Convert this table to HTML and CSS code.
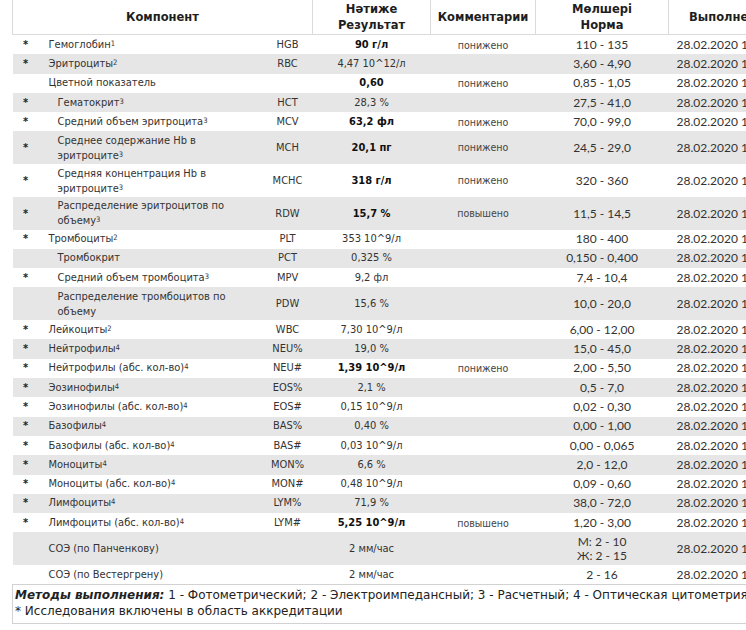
FILE: index.html
```html
<!DOCTYPE html>
<html lang="ru">
<head>
<meta charset="utf-8">
<title>Общий анализ крови</title>
<link rel="stylesheet" href="styles.css">
</head>
<body>
<div class="sheet">
  <table class="lab">
    <colgroup>
      <col class="c-star"><col class="c-name"><col class="c-code"><col class="c-res"><col class="c-com"><col class="c-norm"><col class="c-date">
    </colgroup>
    <thead>
      <tr>
        <th colspan="3">Компонент</th>
        <th>Нәтиже<br>Результат</th>
        <th>Комментарии</th>
        <th>Мөлшері<br>Норма</th>
        <th class="h-date">Выполнено</th>
      </tr>
    </thead>
    <tbody>
      <tr><td class="star">*</td><td class="name">Гемоглобин<sup>1</sup></td><td class="code">HGB</td><td class="res b">90 г/л</td><td class="com">понижено</td><td class="norm">110 - 135</td><td class="date">28.02.2020 10:15</td></tr>
      <tr><td class="star">*</td><td class="name">Эритроциты<sup>2</sup></td><td class="code">RBC</td><td class="res">4,47 10^12/л</td><td class="com"></td><td class="norm">3,60 - 4,90</td><td class="date">28.02.2020 10:15</td></tr>
      <tr><td class="star"></td><td class="name">Цветной показатель</td><td class="code"></td><td class="res b">0,60</td><td class="com">понижено</td><td class="norm">0,85 - 1,05</td><td class="date">28.02.2020 10:15</td></tr>
      <tr><td class="star">*</td><td class="name ind">Гематокрит<sup>3</sup></td><td class="code">HCT</td><td class="res">28,3 %</td><td class="com"></td><td class="norm">27,5 - 41,0</td><td class="date">28.02.2020 10:15</td></tr>
      <tr><td class="star">*</td><td class="name ind">Средний объем эритроцита<sup>3</sup></td><td class="code">MCV</td><td class="res b">63,2 фл</td><td class="com">понижено</td><td class="norm">70,0 - 99,0</td><td class="date">28.02.2020 10:15</td></tr>
      <tr class="dbl"><td class="star">*</td><td class="name ind">Среднее содержание Hb в<br>эритроците<sup>3</sup></td><td class="code">MCH</td><td class="res b">20,1 пг</td><td class="com">понижено</td><td class="norm">24,5 - 29,0</td><td class="date">28.02.2020 10:15</td></tr>
      <tr class="dbl"><td class="star">*</td><td class="name ind">Средняя концентрация Hb в<br>эритроците<sup>3</sup></td><td class="code">MCHC</td><td class="res b">318 г/л</td><td class="com">понижено</td><td class="norm">320 - 360</td><td class="date">28.02.2020 10:15</td></tr>
      <tr class="dbl"><td class="star">*</td><td class="name ind">Распределение эритроцитов по<br>объему<sup>3</sup></td><td class="code">RDW</td><td class="res b">15,7 %</td><td class="com">повышено</td><td class="norm">11,5 - 14,5</td><td class="date">28.02.2020 10:15</td></tr>
      <tr><td class="star">*</td><td class="name">Тромбоциты<sup>2</sup></td><td class="code">PLT</td><td class="res">353 10^9/л</td><td class="com"></td><td class="norm">180 - 400</td><td class="date">28.02.2020 10:15</td></tr>
      <tr><td class="star"></td><td class="name ind">Тромбокрит</td><td class="code">PCT</td><td class="res">0,325 %</td><td class="com"></td><td class="norm">0,150 - 0,400</td><td class="date">28.02.2020 10:15</td></tr>
      <tr><td class="star">*</td><td class="name ind">Средний объем тромбоцита<sup>3</sup></td><td class="code">MPV</td><td class="res">9,2 фл</td><td class="com"></td><td class="norm">7,4 - 10,4</td><td class="date">28.02.2020 10:15</td></tr>
      <tr class="dbl"><td class="star"></td><td class="name ind">Распределение тромбоцитов по<br>объему</td><td class="code">PDW</td><td class="res">15,6 %</td><td class="com"></td><td class="norm">10,0 - 20,0</td><td class="date">28.02.2020 10:15</td></tr>
      <tr><td class="star">*</td><td class="name">Лейкоциты<sup>2</sup></td><td class="code">WBC</td><td class="res">7,30 10^9/л</td><td class="com"></td><td class="norm">6,00 - 12,00</td><td class="date">28.02.2020 10:15</td></tr>
      <tr><td class="star">*</td><td class="name">Нейтрофилы<sup>4</sup></td><td class="code">NEU%</td><td class="res">19,0 %</td><td class="com"></td><td class="norm">15,0 - 45,0</td><td class="date">28.02.2020 10:15</td></tr>
      <tr><td class="star">*</td><td class="name">Нейтрофилы (абс. кол-во)<sup>4</sup></td><td class="code">NEU#</td><td class="res b">1,39 10^9/л</td><td class="com">понижено</td><td class="norm">2,00 - 5,50</td><td class="date">28.02.2020 10:15</td></tr>
      <tr><td class="star">*</td><td class="name">Эозинофилы<sup>4</sup></td><td class="code">EOS%</td><td class="res">2,1 %</td><td class="com"></td><td class="norm">0,5 - 7,0</td><td class="date">28.02.2020 10:15</td></tr>
      <tr><td class="star">*</td><td class="name">Эозинофилы (абс. кол-во)<sup>4</sup></td><td class="code">EOS#</td><td class="res">0,15 10^9/л</td><td class="com"></td><td class="norm">0,02 - 0,30</td><td class="date">28.02.2020 10:15</td></tr>
      <tr><td class="star">*</td><td class="name">Базофилы<sup>4</sup></td><td class="code">BAS%</td><td class="res">0,40 %</td><td class="com"></td><td class="norm">0,00 - 1,00</td><td class="date">28.02.2020 10:15</td></tr>
      <tr><td class="star">*</td><td class="name">Базофилы (абс. кол-во)<sup>4</sup></td><td class="code">BAS#</td><td class="res">0,03 10^9/л</td><td class="com"></td><td class="norm">0,00 - 0,065</td><td class="date">28.02.2020 10:15</td></tr>
      <tr><td class="star">*</td><td class="name">Моноциты<sup>4</sup></td><td class="code">MON%</td><td class="res">6,6 %</td><td class="com"></td><td class="norm">2,0 - 12,0</td><td class="date">28.02.2020 10:15</td></tr>
      <tr><td class="star">*</td><td class="name">Моноциты (абс. кол-во)<sup>4</sup></td><td class="code">MON#</td><td class="res">0,48 10^9/л</td><td class="com"></td><td class="norm">0,09 - 0,60</td><td class="date">28.02.2020 10:15</td></tr>
      <tr><td class="star">*</td><td class="name">Лимфоциты<sup>4</sup></td><td class="code">LYM%</td><td class="res">71,9 %</td><td class="com"></td><td class="norm">38,0 - 72,0</td><td class="date">28.02.2020 10:15</td></tr>
      <tr><td class="star">*</td><td class="name">Лимфоциты (абс. кол-во)<sup>4</sup></td><td class="code">LYM#</td><td class="res b">5,25 10^9/л</td><td class="com">повышено</td><td class="norm">1,20 - 3,00</td><td class="date">28.02.2020 10:15</td></tr>
      <tr class="dbl"><td class="star"></td><td class="name">СОЭ (по Панченкову)</td><td class="code"></td><td class="res">2 мм/час</td><td class="com"></td><td class="norm two">М: 2 - 10<br>Ж: 2 - 15</td><td class="date">28.02.2020 10:15</td></tr>
      <tr class="last"><td class="star"></td><td class="name">СОЭ (по Вестергрену)</td><td class="code"></td><td class="res">2 мм/час</td><td class="com"></td><td class="norm">2 - 16</td><td class="date">28.02.2020 10:15</td></tr>
    </tbody>
  </table>
  <div class="methods">
    <p><b><i>Методы выполнения:</i></b> 1 - Фотометрический; 2 - Электроимпедансный; 3 - Расчетный; 4 - Оптическая цитометрия</p>
    <p>* Исследования включены в область аккредитации</p>
  </div>
</div>
</body>
</html>
```
FILE: styles.css
```css
html, body {
  margin: 0;
  padding: 0;
  background: #ffffff;
  overflow: hidden;
}

body {
  width: 746px;
  height: 630px;
  font-family: "DejaVu Sans Condensed", "DejaVu Sans", sans-serif;
  color: #262626;
}

.sheet {
  padding-left: 12px;
  width: 800px;
}

.lab {
  border-collapse: collapse;
  table-layout: fixed;
  width: 776px;
}

.c-star { width: 26px; }
.c-name { width: 224px; }
.c-code { width: 50px; }
.c-res { width: 118px; }
.c-com { width: 105px; }
.c-norm { width: 133px; }
.c-date { width: 120px; }

.lab th {
  font-family: "DejaVu Sans", sans-serif;
  font-weight: bold;
  font-size: 11.5px;
  line-height: 16px;
  height: 34px;
  padding: 0;
  border-left: 1px solid #dadada;
  border-right: 1px solid #dadada;
  border-bottom: 1px solid #dadada;
  text-align: center;
  vertical-align: middle;
  color: #1e1e1e;
}

.lab th.h-date {
  text-align: left;
  padding-left: 20px;
  white-space: nowrap;
}

.lab td {
  padding: 0;
  height: 19.3px;
  font-size: 11px;
  line-height: 14px;
  vertical-align: middle;
  white-space: nowrap;
}

.lab tr.dbl td {
  height: 32.7px;
  line-height: 15px;
}

.lab tbody tr:nth-child(even) td {
  background: #e6e6e6;
}

.star {
  text-align: center;
  font-size: 11px;
  font-weight: bold;
  color: #222;
}

.name {
  padding-left: 10px !important;
  color: #333;
}

.name.ind {
  padding-left: 19px !important;
}

.code {
  text-align: center;
  color: #333;
}

.res {
  text-align: center;
  color: #333;
}

.res.b {
  font-weight: bold;
  color: #111;
}

.com {
  text-align: center;
  color: #444;
  font-size: 10.5px !important;
}

.norm {
  text-align: center;
  font-family: Lato, "Open Sans", sans-serif;
  font-size: 12px !important;
  color: #333;
}

.norm.two {
  line-height: 14px !important;
}

.date {
  padding-left: 8px !important;
  font-family: Lato, "Open Sans", sans-serif;
  font-size: 12px !important;
  color: #333;
}

sup {
  font-size: 7.5px;
  line-height: 0;
  vertical-align: 2px;
}

.methods {
  width: 760px;
  height: 36px;
  border: 1px solid #d2d2d2;
  padding: 2px 0 0 2px;
  font-family: "DejaVu Sans", sans-serif;
  font-size: 12px;
  line-height: 16px;
  color: #222;
  white-space: nowrap;
}

.methods p {
  margin: 0;
}
```
